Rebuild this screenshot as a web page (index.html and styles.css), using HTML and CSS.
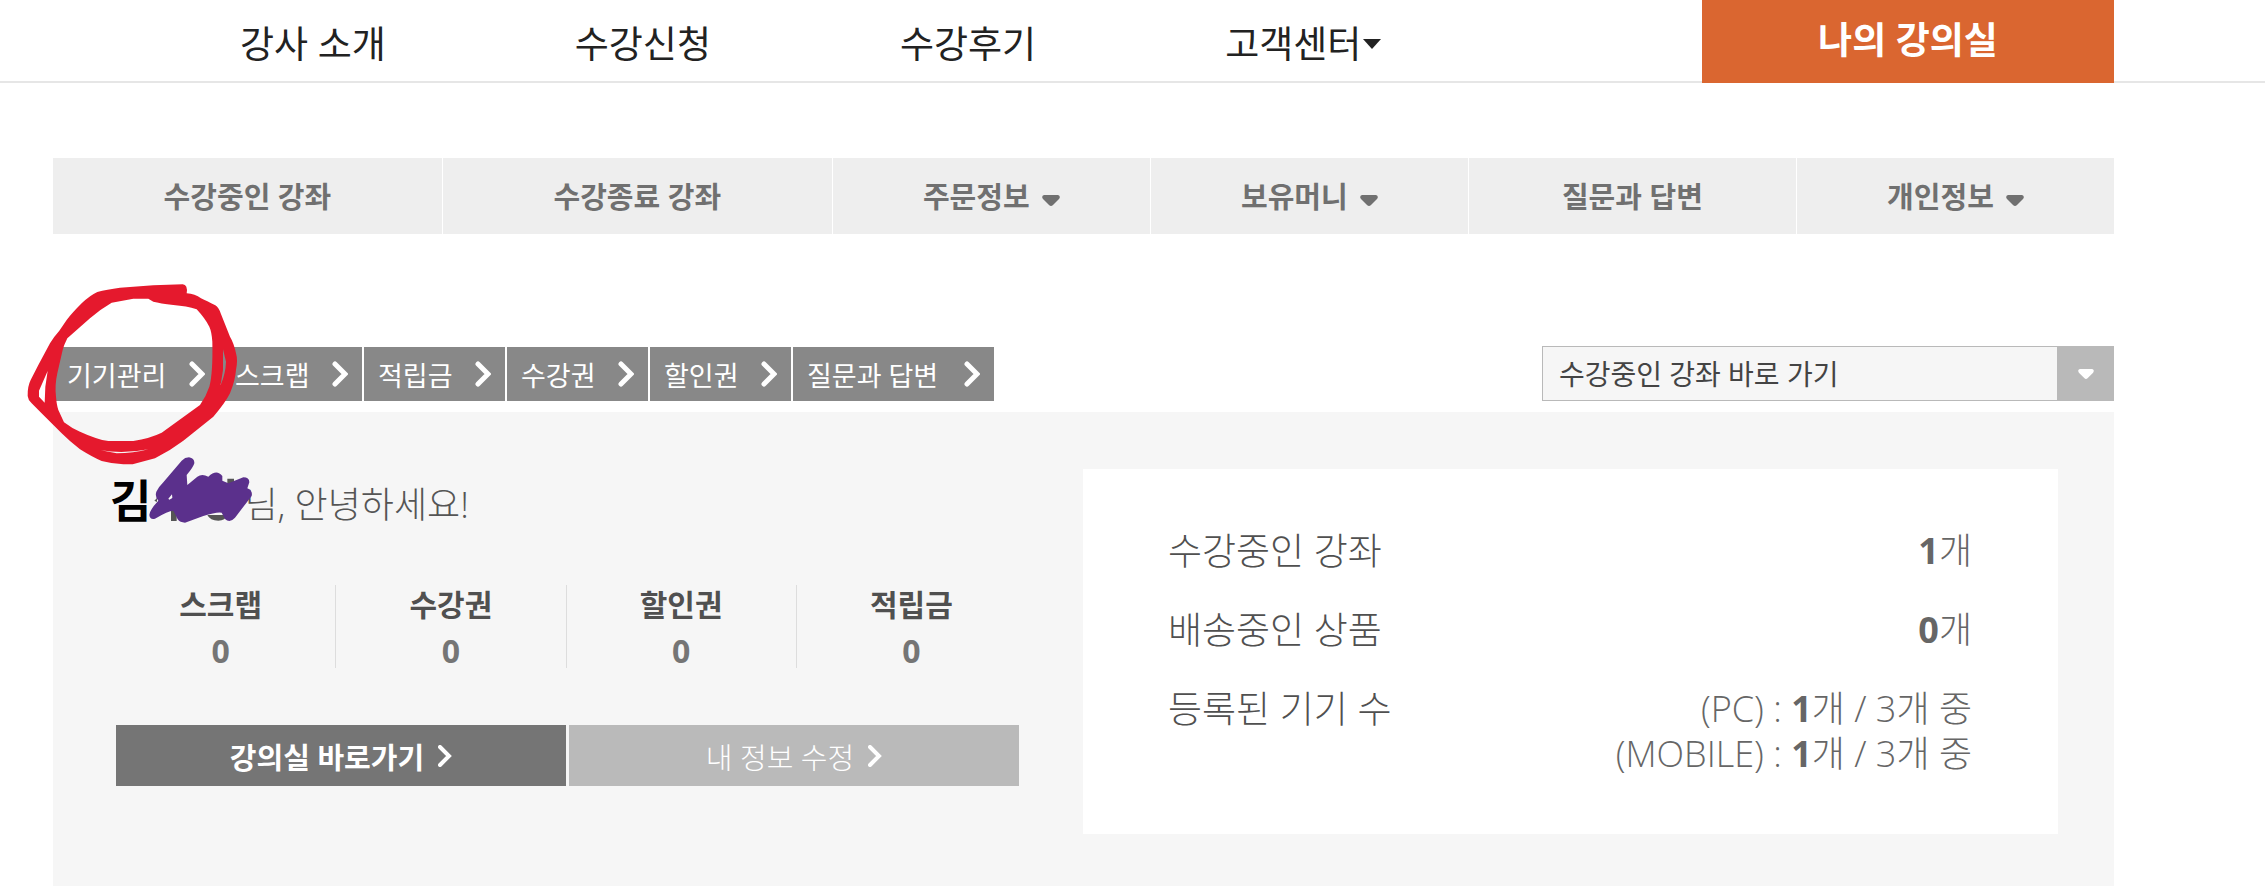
FILE: index.html
```html
<!DOCTYPE html>
<html lang="ko">
<head>
<meta charset="utf-8">
<title>나의 강의실</title>
<link rel="stylesheet" href="styles.css">
</head>
<body>
<header class="header">
  <nav class="main-nav">
    <a href="#">강사 소개</a>
    <a href="#">수강신청</a>
    <a href="#">수강후기</a>
    <a href="#">고객센터<svg class="caret-small" viewBox="0 0 18 10"><path d="M0 0h18L9 10z"/></svg></a>
  </nav>
  <a href="#" class="my-room">나의 강의실</a>
</header>

<main class="container">
  <nav class="tabs">
    <a href="#" class="tab wide">수강중인 강좌</a>
    <a href="#" class="tab wide">수강종료 강좌</a>
    <a href="#" class="tab">주문정보<svg class="caret" viewBox="0 0 18 11"><path d="M2 0h14q3 1 1 4l-6 6q-2 2-4 0L1 4q-2-3 1-4z"/></svg></a>
    <a href="#" class="tab">보유머니<svg class="caret" viewBox="0 0 18 11"><path d="M2 0h14q3 1 1 4l-6 6q-2 2-4 0L1 4q-2-3 1-4z"/></svg></a>
    <a href="#" class="tab qna">질문과 답변</a>
    <a href="#" class="tab">개인정보<svg class="caret" viewBox="0 0 18 11"><path d="M2 0h14q3 1 1 4l-6 6q-2 2-4 0L1 4q-2-3 1-4z"/></svg></a>
  </nav>

  <div class="toolbar">
    <div class="shortcuts">
      <a href="#" class="device">기기관리<svg class="arrow" viewBox="0 0 16 26"><path d="M3 3l10 10L3 23"/></svg></a>
      <a href="#">스크랩<svg class="arrow" viewBox="0 0 16 26"><path d="M3 3l10 10L3 23"/></svg></a>
      <a href="#">적립금<svg class="arrow" viewBox="0 0 16 26"><path d="M3 3l10 10L3 23"/></svg></a>
      <a href="#">수강권<svg class="arrow" viewBox="0 0 16 26"><path d="M3 3l10 10L3 23"/></svg></a>
      <a href="#">할인권<svg class="arrow" viewBox="0 0 16 26"><path d="M3 3l10 10L3 23"/></svg></a>
      <a href="#" class="question">질문과 답변<svg class="arrow" viewBox="0 0 16 26"><path d="M3 3l10 10L3 23"/></svg></a>
    </div>
    <div class="course-select">
      <select aria-label="수강중인 강좌 바로 가기">
        <option>수강중인 강좌 바로 가기</option>
      </select>
      <span class="select-arrow"><svg viewBox="0 0 18 11"><path d="M2 0h14q3 1 1 4l-6 6q-2 2-4 0L1 4q-2-3 1-4z"/></svg></span>
    </div>
  </div>

  <section class="panel">
    <div class="profile">
      <p class="greeting"><strong>김</strong><span>님, 안녕하세요!</span></p>
      <dl class="stats">
        <div><dt>스크랩</dt><dd>0</dd></div>
        <div><dt>수강권</dt><dd>0</dd></div>
        <div><dt>할인권</dt><dd>0</dd></div>
        <div><dt>적립금</dt><dd>0</dd></div>
      </dl>
      <div class="buttons">
        <button type="button" class="btn-room">강의실 바로가기<svg viewBox="0 0 14 22"><path d="M2 2l9 9-9 9"/></svg></button>
        <button type="button" class="btn-info">내 정보 수정<svg viewBox="0 0 14 22"><path d="M2 2l9 9-9 9"/></svg></button>
      </div>
    </div>

    <dl class="summary">
      <div><dt>수강중인 강좌</dt><dd><b>1</b>개</dd></div>
      <div><dt>배송중인 상품</dt><dd><b>0</b>개</dd></div>
      <div><dt>등록된 기기 수</dt><dd>(PC) : <b>1</b>개 / 3개 중<br>(MOBILE) : <b>1</b>개 / 3개 중</dd></div>
    </dl>
  </section>
</main>

<!-- hand drawn marks -->
<svg class="marks" viewBox="0 0 1560 810">
  <path fill="#e5192d" fill-rule="evenodd" d="M548 43L460 46L360 53Q320 58 292 66Q270 76 245 100Q215 130 200 150L178 182Q160 202 150 220L115 285L92 330Q82 350 83 378Q84 390 95 400L130 435L185 490Q210 515 240 538Q280 563 305 573Q340 582 370 583H398L465 565Q510 542 550 512L640 440Q675 400 690 370Q706 330 708 300Q714 270 708 250Q702 220 690 200L662 130Q656 112 646 106Q620 93 603 85Q585 72 560 70Q564 45 548 43Z
    M445 86H400L335 98Q300 118 270 145L202 205Q192 225 188 240L172 310Q164 345 168 380Q170 405 175 420L192 457Q215 475 240 485Q290 508 325 513H400Q450 505 485 488L600 405Q618 380 628 350Q639 310 637 215Q635 185 628 170Q615 145 590 118Q560 108 520 105Q480 100 460 95Z
    M143 303L117 362V380L134 398L136 350ZM669 238V300L662 345Q677 310 678 275ZM303 541Q370 553 445 538Q400 550 350 550Z"/>
  <path d="M463 692l8-8v12zM513 710h17v43h-17zM682 626h20v30h-20zM622 735Q630 752 655 752Q676 752 682 735Z"/>
  <path fill="#5b308c" fill-rule="evenodd" d="M567 562Q584 565 583 580Q580 592 560 615L562 645L592 620Q606 610 625 620Q650 596 667 618V632L685 640L730 622Q748 622 748 637L742 655Q759 662 755 678L705 743Q690 760 675 747L665 728Q650 725 610 738L555 758Q540 758 533 748L520 722Q505 722 465 746Q450 750 448 735Q450 718 475 692Q464 680 469 665Q475 652 490 637L545 572Q555 562 567 562ZM516 673L505 686L508 689L517 684Z"/>
</svg>
</body>
</html>
```
FILE: styles.css
```css
* {
  box-sizing: border-box;
}

body {
  margin: 0;
  position: relative;
  background: #fff;
  color: #555;
  font-family: "Open Sans", "Noto Sans CJK KR", sans-serif;
  font-size: 28px;
}

a {
  color: inherit;
  text-decoration: none;
}

p, dl, dd {
  margin: 0;
}

.header {
  display: flex;
  justify-content: space-between;
  height: 83px;
  padding-right: 151px;
  background: linear-gradient(#e6e6e6, #e6e6e6) bottom / 100% 2px no-repeat;
}

.main-nav {
  display: flex;
  align-items: center;
  gap: 189px;
  padding: 4px 0 0 240px;
  color: #222;
  font-size: 37px;
  line-height: 48px;
  white-space: nowrap;
}

.caret-small {
  width: 18px;
  height: 10px;
  margin-left: 2px;
  vertical-align: 9px;
}

.my-room {
  width: 412px;
  padding-top: 16px;
  background: #da6630;
  color: #fff;
  font-size: 37px;
  font-weight: bold;
  line-height: 48px;
  text-align: center;
}

.container {
  margin: 75px 151px 0 53px;
}

.tabs {
  display: flex;
  gap: 1px;
}

.tab {
  flex: 318 1 0;
  padding-top: 2px;
  background: #eee;
  color: #707070;
  font-size: 29px;
  font-weight: bold;
  line-height: 74px;
  text-align: center;
  white-space: nowrap;
}

.wide {
  flex-grow: 390;
}

.qna {
  flex-grow: 328;
}

svg {
  fill: currentColor;
}

.caret {
  width: 18px;
  height: 11px;
  margin-left: 12px;
  vertical-align: 2px;
}

.toolbar {
  display: flex;
  justify-content: space-between;
  align-items: flex-end;
  margin-top: 112px;
}

.shortcuts {
  display: flex;
  gap: 2px;
}

.shortcuts a {
  display: flex;
  align-items: center;
  justify-content: space-between;
  width: 141px;
  height: 54px;
  padding: 0 14px;
  background: #888;
  color: #fff;
  font-size: 27px;
  white-space: nowrap;
}

.shortcuts .device {
  width: 166px;
}

.shortcuts .question {
  width: 201px;
}

.arrow {
  width: 16px;
  height: 26px;
}

.arrow path,
.buttons path {
  fill: none;
  stroke: #fff;
  stroke-width: 4;
  stroke-linecap: round;
}

.arrow path {
  stroke-width: 5;
}

.course-select {
  position: relative;
  width: 572px;
  height: 55px;
}

.course-select select {
  width: 100%;
  height: 100%;
  padding: 0 70px 0 16px;
  appearance: none;
  background: #f6f6f6;
  border: 1px solid #b9b9b9;
  border-radius: 0;
  color: #444;
  font-family: inherit;
  font-size: 28px;
}

.select-arrow {
  display: flex;
  align-items: center;
  justify-content: center;
  position: absolute;
  top: 0;
  right: 0;
  width: 57px;
  height: 100%;
  background: #b9b9b9;
  color: #fff;
  pointer-events: none;
}

.select-arrow svg {
  width: 16px;
  height: 10px;
}

.panel {
  display: flex;
  justify-content: space-between;
  padding: 57px 56px 52px 53px;
  margin-top: 11px;
  background: #f6f6f6;
}

.profile {
  width: 920px;
}

.greeting {
  display: flex;
  align-items: baseline;
  gap: 93px;
  padding-left: 4px;
  font-size: 36px;
  line-height: 64px;
}

.greeting strong {
  color: #000;
  font-size: 45px;
}

.greeting span {
  font-weight: 300;
}

.stats {
  display: flex;
  margin-top: 48px;
}

.stats div {
  flex: 1;
  height: 83px;
  text-align: center;
  font-weight: bold;
}

.stats div + div {
  border-left: 1px solid #ddd;
}

.stats dt {
  color: #505050;
  font-size: 30px;
  line-height: 40px;
}

.stats dd {
  color: #757575;
  font-size: 32px;
  line-height: 52px;
}

.buttons {
  display: flex;
  gap: 3px;
  margin-top: 57px;
  padding: 0 7px 0 10px;
}

.buttons button {
  display: flex;
  flex: 1;
  align-items: center;
  justify-content: center;
  height: 61px;
  border: none;
  background: #757575;
  color: #fff;
  font-family: inherit;
  font-size: 29px;
  cursor: pointer;
}

.buttons .btn-room {
  font-weight: bold;
}

.buttons .btn-info {
  background: #bababa;
  font-weight: 300;
}

.buttons svg {
  width: 14px;
  height: 22px;
  margin-left: 14px;
}

.summary {
  width: 975px;
  padding: 59px 86px 58px 85px;
  background: #fff;
  font-size: 37px;
  font-weight: 300;
  line-height: 45px;
}

.summary div {
  display: flex;
  justify-content: space-between;
}

.summary div + div {
  margin-top: 34px;
}

.summary dt {
  color: #505050;
}

.summary dd {
  color: #666;
  font-size: 36px;
  text-align: right;
}

.summary b {
  font-weight: bold;
}

.marks {
  position: absolute;
  top: 270px;
  left: 0;
  width: 520px;
  height: 270px;
  pointer-events: none;
}
```
